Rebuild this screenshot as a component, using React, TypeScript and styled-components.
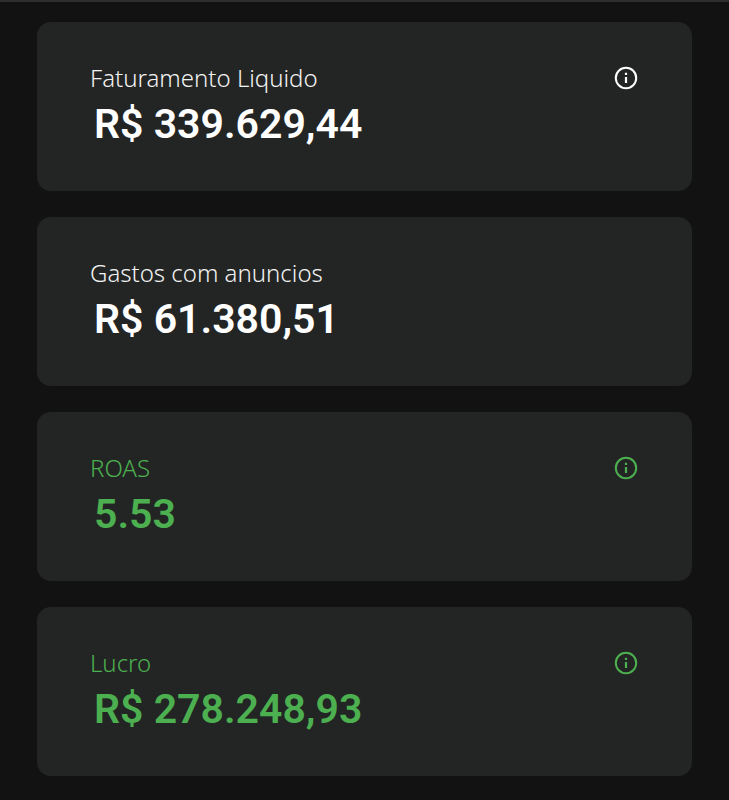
import React from 'react';
import styled, { createGlobalStyle } from 'styled-components';

const GlobalStyle = createGlobalStyle`
  * { box-sizing: border-box; }
  body { margin: 0; background: #121212; font-family: "Noto Sans", sans-serif; }
`;

const Page = styled.main`
  min-height: 100vh;
  padding: 20px 37px 23px;
  border-top: 2px solid #2e2e2e;
  background: #121212;
`;

const Metrics = styled.div`
  display: grid;
  gap: 26px;
`;

const Card = styled.section<{ $positive?: boolean }>`
  display: flex;
  justify-content: space-between;
  align-items: flex-start;
  min-height: 169px;
  padding: 42px 54px 42px 53px;
  border-radius: 14px;
  background: #232524;
  color: ${({ $positive }) => ($positive ? '#4caf50' : '#ffffff')};
`;

const Label = styled.h2<{ $positive?: boolean }>`
  margin: 0;
  color: ${({ $positive }) => ($positive ? '#4caf50' : '#f2f2f2')};
  font-size: 24px;
  line-height: 28px;
  font-weight: 300;
`;

const Value = styled.p`
  margin: 8px 0 0 4px;
  font-family: Roboto, sans-serif;
  font-size: 41px;
  line-height: 48px;
  font-weight: 600;
`;

const InfoButton = styled.button`
  display: flex;
  margin: 2px 0 0;
  padding: 0;
  border: 0;
  background: none;
  color: inherit;
  cursor: pointer;
`;

function InfoIcon() {
  return (
    <svg width="24" height="24" viewBox="0 0 24 24" fill="none" stroke="currentColor" strokeWidth="2" aria-hidden="true">
      <circle cx="12" cy="12" r="10.2" />
      <path d="M12 11v6M12 6.7v2.2" strokeWidth="2.2" />
    </svg>
  );
}

const metrics = [
  { label: 'Faturamento Liquido', value: 'R$ 339.629,44', info: true },
  { label: 'Gastos com anuncios', value: 'R$ 61.380,51' },
  { label: 'ROAS', value: '5.53', info: true, positive: true },
  { label: 'Lucro', value: 'R$ 278.248,93', info: true, positive: true },
];

export default function App() {
  return (
    <Page>
      <GlobalStyle />
      <Metrics>
        {metrics.map(({ label, value, info, positive }) => (
          <Card key={label} $positive={positive}>
            <div>
              <Label $positive={positive}>{label}</Label>
              <Value>{value}</Value>
            </div>
            {info && (
              <InfoButton type="button" aria-label={`Sobre ${label}`}>
                <InfoIcon />
              </InfoButton>
            )}
          </Card>
        ))}
      </Metrics>
    </Page>
  );
}
